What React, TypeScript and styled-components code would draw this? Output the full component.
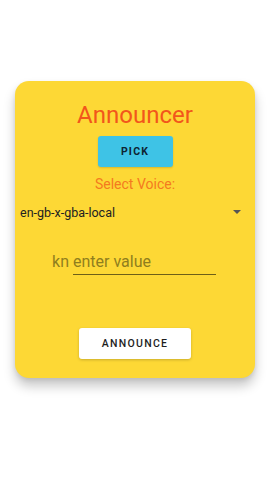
import React, { useState } from "react";
import styled, { createGlobalStyle } from "styled-components";

const GlobalStyle = createGlobalStyle`
  body {
    margin: 0;
    background: #ffffff;
    font-family: Roboto, "Noto Sans", sans-serif;
  }
`;

export default function App() {
  const [value, setValue] = useState("");
  return (
    <Page>
      <GlobalStyle />
      <Card>
        <Title>Announcer</Title>
        <PickButton>PICK</PickButton>
        <Label>Select Voice:</Label>
        <Select>
          <SelectText>en-gb-x-gba-local</SelectText>
          <Caret />
        </Select>
        <InputRow>
          <Prefix>kn</Prefix>
          <Input
            placeholder="enter value"
            value={value}
            onChange={e => setValue(e.target.value)}
          />
        </InputRow>
        <AnnounceButton>ANNOUNCE</AnnounceButton>
      </Card>
    </Page>
  );
}

const Page = styled.div`
  width: 270px;
  height: 480px;
  padding-top: 81px;
  box-sizing: border-box;
`;

const Card = styled.div`
  margin: 0 15px;
  height: 297px;
  box-sizing: border-box;
  background: #fdd835;
  border-radius: 14px;
  box-shadow: 0 8px 12px rgba(0, 0, 0, 0.22), 0 2px 4px rgba(0, 0, 0, 0.08);
  display: flex;
  flex-direction: column;
  align-items: center;
  padding-top: 20px;
`;

const Title = styled.div`
  font-size: 24px;
  line-height: 28px;
  color: #f2561b;
`;

const PickButton = styled.button`
  margin-top: 7px;
  width: 75px;
  height: 31px;
  border: none;
  border-radius: 3px;
  background: #3ec3e6;
  color: #0e2433;
  font-family: Roboto, sans-serif;
  font-weight: 700;
  font-size: 10.5px;
  letter-spacing: 1.2px;
  box-shadow: 0 1px 2px rgba(0, 0, 0, 0.15);
`;

const Label = styled.div`
  margin-top: 9px;
  font-size: 14px;
  line-height: 16px;
  color: #f47a1f;
`;

const Select = styled.div`
  align-self: stretch;
  display: flex;
  align-items: center;
  justify-content: space-between;
  margin-top: 12px;
  padding: 0 14px 0 5px;
  height: 16px;
`;

const SelectText = styled.span`
  font-size: 12.5px;
  color: #222;
`;

const Caret = styled.span`
  width: 0;
  height: 0;
  border-left: 4px solid transparent;
  border-right: 4px solid transparent;
  border-top: 4px solid #555;
`;

const InputRow = styled.div`
  display: flex;
  align-items: baseline;
  margin-top: 31px;
  margin-left: -2px;
`;

const Prefix = styled.span`
  font-size: 16px;
  line-height: 22px;
  color: #8f7e1e;
  margin-right: 4px;
`;

const Input = styled.input`
  width: 143px;
  background: transparent;
  border: none;
  border-bottom: 1px solid #6d5f18;
  padding: 0 0 1px 0;
  font-family: Roboto, sans-serif;
  font-size: 16px;
  line-height: 22px;
  color: #333;
  outline: none;
  &::placeholder {
    color: #8f7e1e;
  }
`;

const AnnounceButton = styled.button`
  margin-top: 53px;
  width: 112px;
  height: 31px;
  border: none;
  border-radius: 3px;
  background: #ffffff;
  color: #1e1e1e;
  font-family: Roboto, sans-serif;
  font-weight: 500;
  font-size: 10.5px;
  letter-spacing: 1.3px;
  box-shadow: 0 1px 3px rgba(0, 0, 0, 0.2);
`;
